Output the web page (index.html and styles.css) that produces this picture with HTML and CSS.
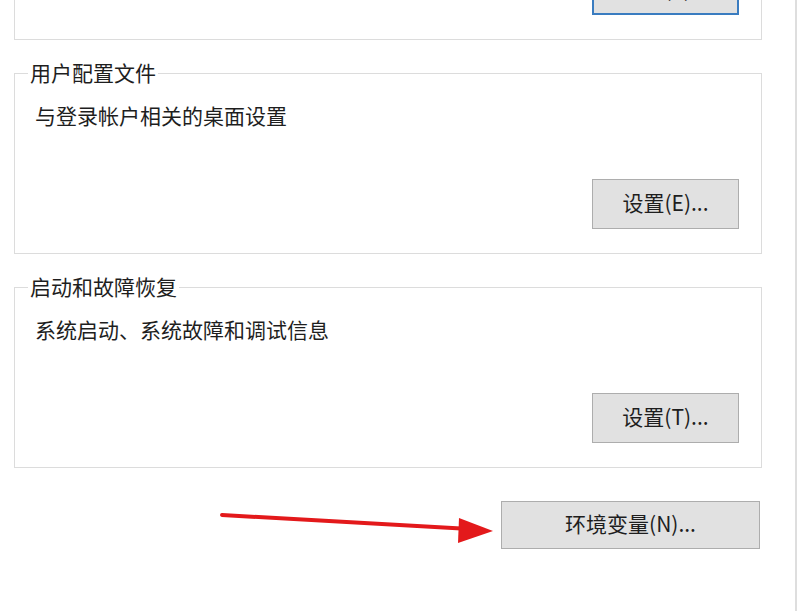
FILE: index.html
```html
<!DOCTYPE html>
<html lang="zh-CN">
<head>
  <meta charset="UTF-8">
  <title>系统属性 - 高级</title>
  <meta name="viewport" content="width=device-width, initial-scale=1.0">
  <link rel="stylesheet" href="styles.css">
</head>
<body>
  <div class="window">
    <!-- only the bottom of the first group is in view -->
    <section class="group group-first">
      <button class="btn btn-default">设置(S)...</button>
    </section>

    <section class="group">
      <span class="group-title">用户配置文件</span>
      <p class="group-desc">与登录帐户相关的桌面设置</p>
      <button class="btn">设置(E)...</button>
    </section>

    <section class="group">
      <span class="group-title">启动和故障恢复</span>
      <p class="group-desc">系统启动、系统故障和调试信息</p>
      <button class="btn">设置(T)...</button>
    </section>

    <div class="footer">
      <button class="btn btn-wide">环境变量(N)...</button>
    </div>

    <!-- red annotation arrow pointing at the button -->
    <svg class="arrow" viewBox="0 0 800 611" xmlns="http://www.w3.org/2000/svg">
      <path d="M222,515 L470,529" stroke="#e3191b" stroke-width="4" stroke-linecap="round" fill="none"/>
      <path d="M459,518 L493,531 L458,543 Z" fill="#e3191b"/>
    </svg>
  </div>
</body>
</html>
```

FILE: styles.css
```css
body {
  margin: 0;
  background: #fff;
  font-family: "Noto Sans CJK SC", "Noto Sans", sans-serif;
  color: #1e1e1e;
  overflow: hidden;
}

.window {
  position: relative;
  width: 797px;
  height: 611px;
  border-right: 2px solid #dedede;
  padding-left: 14px;
  box-sizing: border-box;
  display: flex;
  flex-direction: column;
  gap: 33px;
  overflow: hidden;
}

.group {
  position: relative;
  flex: none;
  width: 748px;
  height: 181px;
  box-sizing: border-box;
  border: 1px solid #dcdcdc;
  padding: 29px 22px 24px 20px;
  display: flex;
  flex-direction: column;
}

.group-first {
  margin-top: -141px;
}

.group-title {
  position: absolute;
  top: -14px;
  left: 13px;
  padding: 0 2px;
  background: #fff;
  font-size: 21px;
  line-height: 24px;
}

.group-desc {
  margin: 0;
  font-size: 21px;
  line-height: 24px;
}

.btn {
  align-self: flex-end;
  margin-top: auto;
  width: 147px;
  height: 50px;
  box-sizing: border-box;
  background: #e1e1e1;
  border: 1px solid #adadad;
  font-family: inherit;
  font-size: 21px;
  color: #1e1e1e;
  padding: 0 0 4px;
}

.btn-default {
  border: 2px solid #3a7cc0;
}

.footer {
  flex: none;
  width: 748px;
  display: flex;
  justify-content: flex-end;
  padding-right: 2px;
  box-sizing: border-box;
}

.btn-wide {
  width: 259px;
  height: 48px;
}

.arrow {
  position: absolute;
  left: 0;
  top: 0;
  width: 800px;
  height: 611px;
  pointer-events: none;
}
```
